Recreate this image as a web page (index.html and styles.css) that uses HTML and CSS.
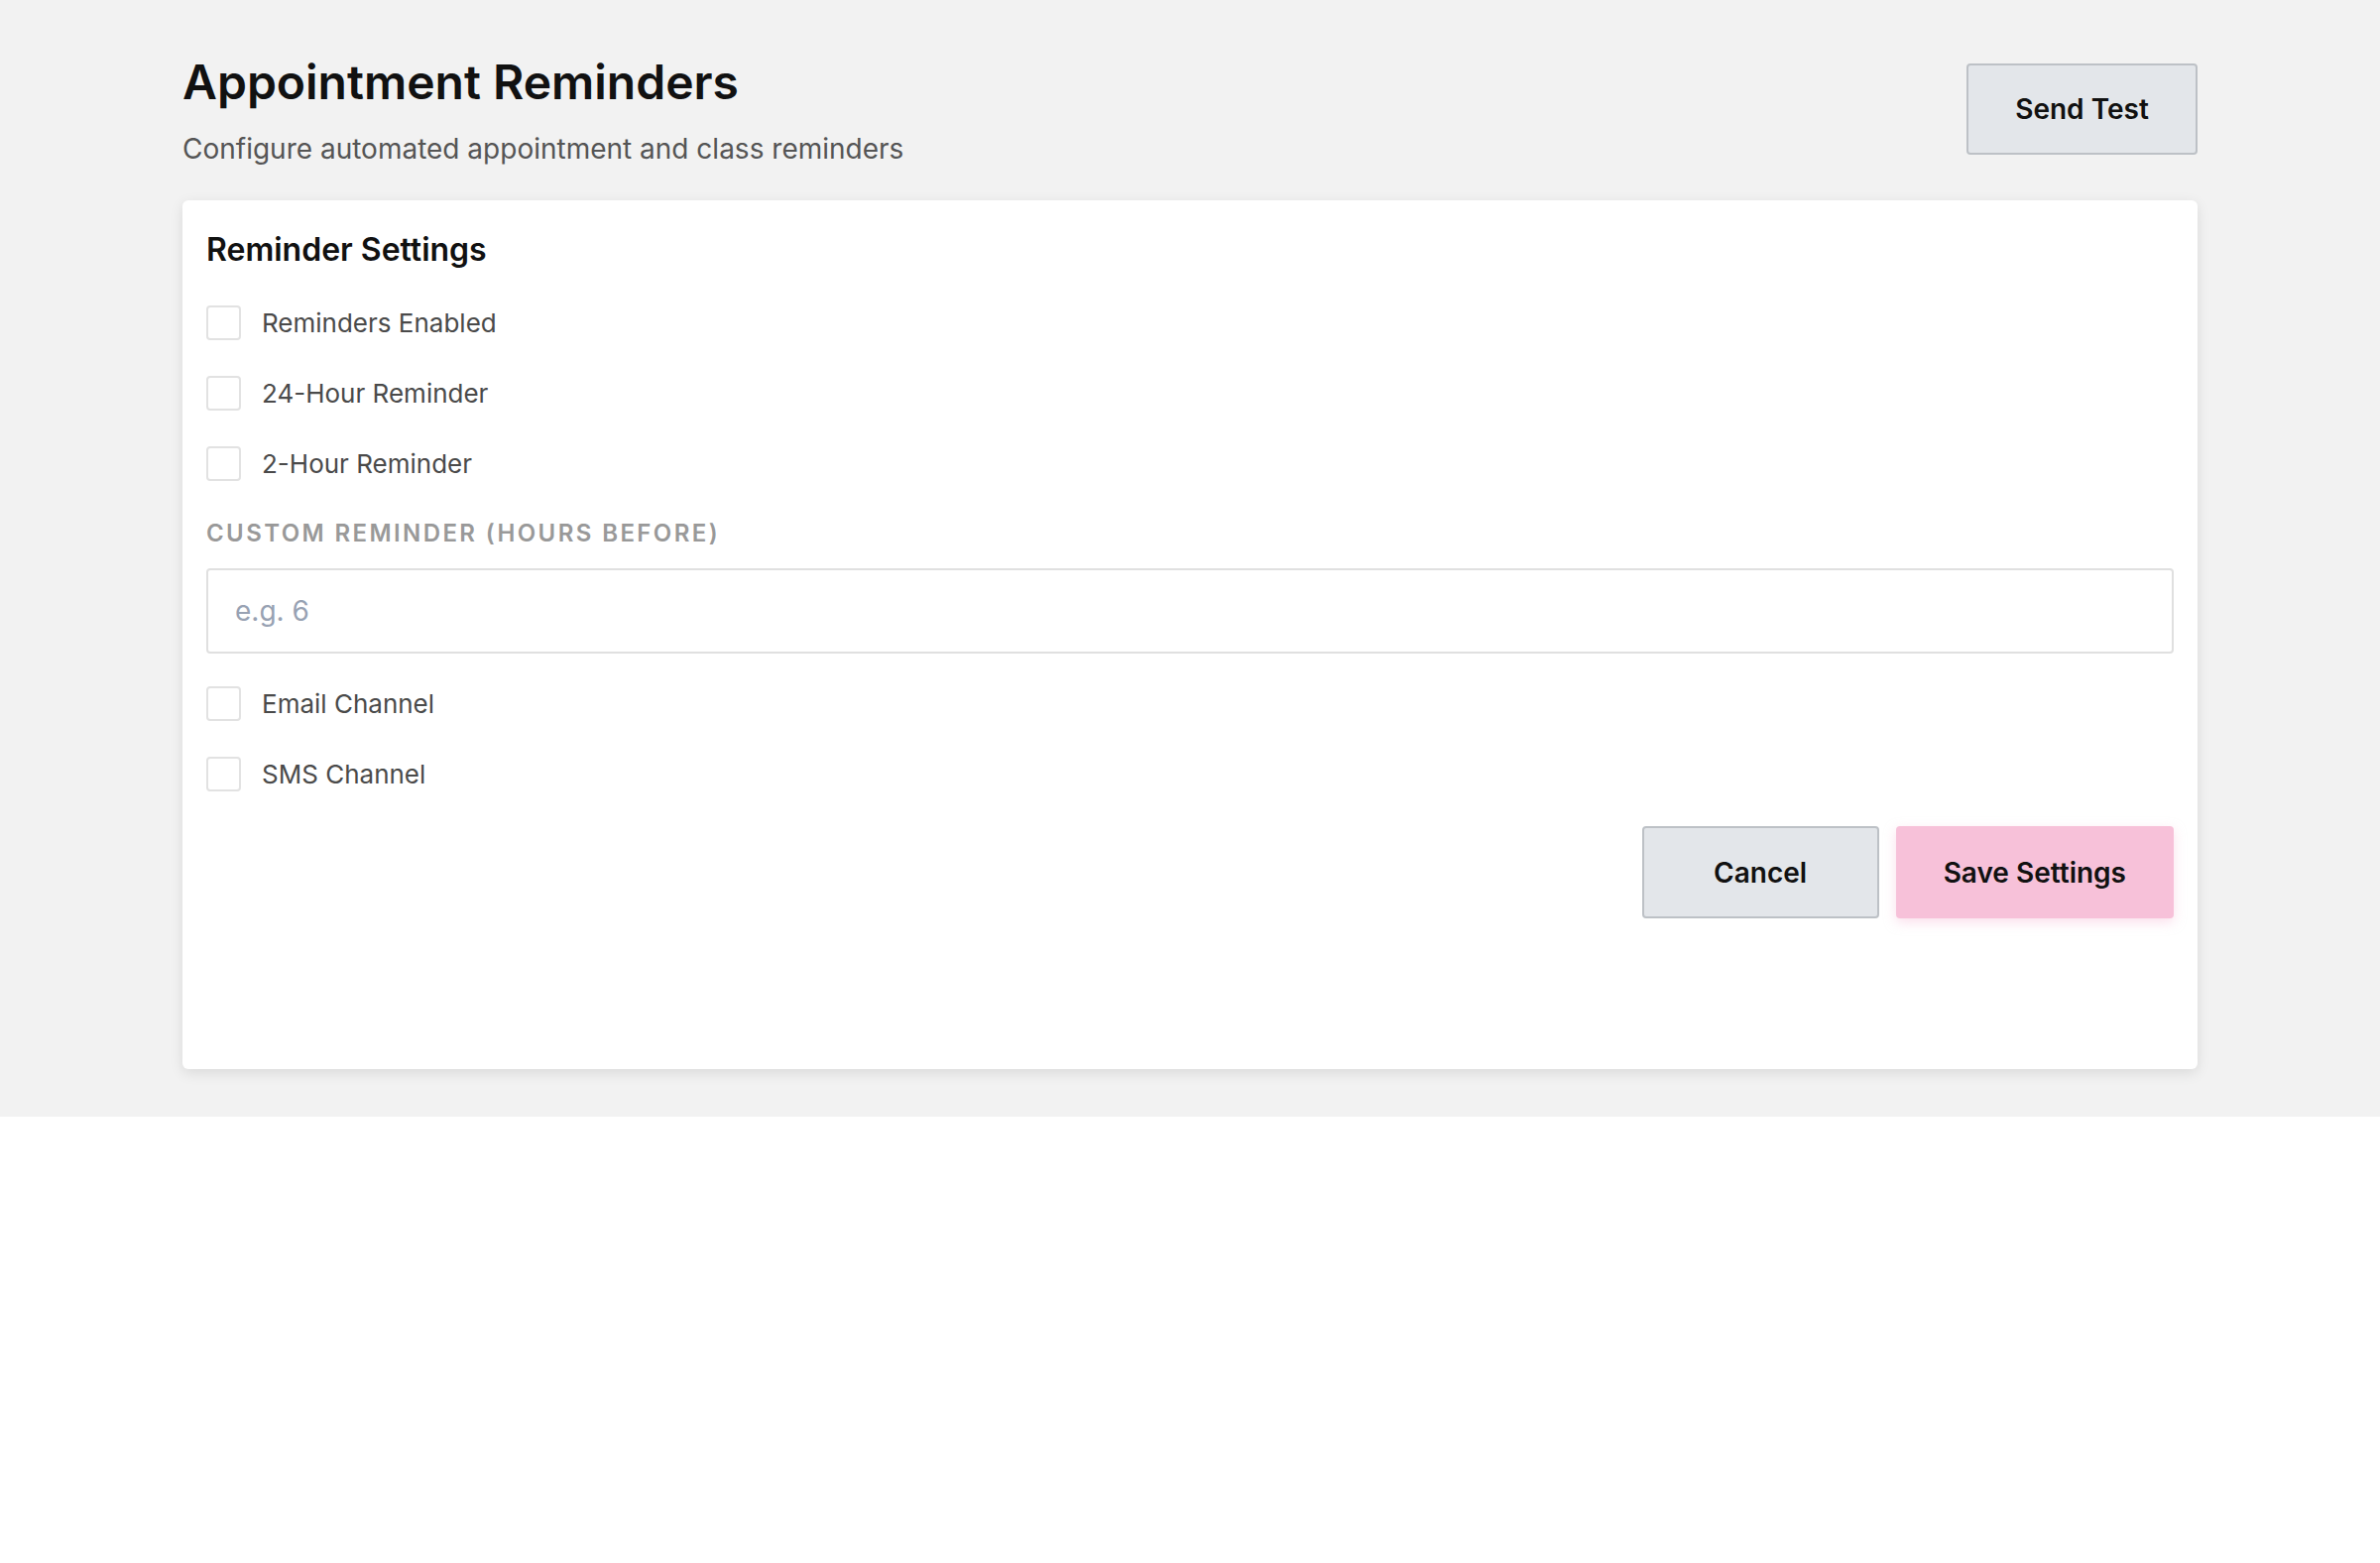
FILE: index.html
```html
<!DOCTYPE html>
<html>
<head>
    <title>Appointment Reminders</title>
    <link rel="stylesheet" href="styles.css">
</head>
<body>
    <div class="page">
        <div class="container">
            <div class="header">
                <div>
                    <h1>Appointment Reminders</h1>
                    <p class="subtitle">Configure automated appointment and class reminders</p>
                </div>
                <button class="btn btn-secondary" onclick="sendTest()">Send Test</button>
            </div>

            <div class="card">
                <h2>Reminder Settings</h2>

                <form class="settings" onsubmit="saveSettings(event)">
                    <label class="check-row">
                        <input type="checkbox" id="enabled">
                        <span>Reminders Enabled</span>
                    </label>
                    <label class="check-row">
                        <input type="checkbox" id="remind24">
                        <span>24-Hour Reminder</span>
                    </label>
                    <label class="check-row">
                        <input type="checkbox" id="remind2">
                        <span>2-Hour Reminder</span>
                    </label>

                    <div class="field">
                        <label class="field-label" for="customHours">Custom Reminder (hours before)</label>
                        <input type="number" id="customHours" class="text-input" placeholder="e.g. 6">
                    </div>

                    <label class="check-row">
                        <input type="checkbox" id="email">
                        <span>Email Channel</span>
                    </label>
                    <label class="check-row">
                        <input type="checkbox" id="sms">
                        <span>SMS Channel</span>
                    </label>

                    <div class="actions">
                        <button type="button" class="btn btn-secondary" onclick="resetForm()">Cancel</button>
                        <button type="submit" class="btn btn-primary">Save Settings</button>
                    </div>
                </form>
            </div>
        </div>
    </div>

    <script>
        function sendTest() {
            console.log('Sending test reminder');
        }

        function resetForm() {
            document.querySelector('.settings').reset();
        }

        function saveSettings(e) {
            e.preventDefault();
            const settings = {
                enabled: document.getElementById('enabled').checked,
                remind24: document.getElementById('remind24').checked,
                remind2: document.getElementById('remind2').checked,
                customHours: document.getElementById('customHours').value,
                email: document.getElementById('email').checked,
                sms: document.getElementById('sms').checked
            };
            console.log('Saved', settings);
        }
    </script>
</body>
</html>
```

FILE: styles.css
```css
body { margin: 0; font-family: Inter, "Noto Sans", sans-serif; color: #111; background: #fff; }
.page { background: #f2f2f2; padding: 48px 0; }
.container { max-width: 2032px; margin: 0 auto; }

.header { display: flex; justify-content: space-between; align-items: center; margin-bottom: 31px; }
h1 { font-size: 48px; font-weight: 600; line-height: 58px; margin: 6px 0 0; color: #111; }
.subtitle { font-size: 28px; line-height: 42px; margin: 17px 0 0; color: #555; }

.card { background: #fff; border-radius: 6px; box-shadow: 0 4px 14px rgba(0,0,0,0.1); padding: 30px 24px 24px; min-height: 876px; box-sizing: border-box; }
h2 { font-size: 32px; font-weight: 600; line-height: 40px; margin: 0 0 32px; color: #111; }

.settings { display: flex; flex-direction: column; gap: 29px; }
.check-row { display: flex; align-items: center; gap: 21px; height: 42px; font-size: 26px; color: #4a4a4a; cursor: pointer; }
.check-row input { appearance: none; width: 35px; height: 35px; margin: 0; border: 2px solid #e2e2e2; border-radius: 4px; background: #fff; box-sizing: border-box; }
.check-row input:checked { background: #f7c1d9; border-color: #e9a3c3; }

.field { display: flex; flex-direction: column; gap: 17px; margin-top: 3px; }
.field-label { font-size: 24px; line-height: 36px; font-weight: 600; letter-spacing: 2.4px; text-transform: uppercase; color: #999; }
.text-input { height: 86px; padding: 0 27px; border: 2px solid #e0e0e0; border-radius: 4px; font-family: inherit; font-size: 28px; color: #333; box-sizing: border-box; outline: none; }
.text-input::placeholder { color: #98a2b3; }

.actions { display: flex; justify-content: flex-end; gap: 17px; margin-top: 3px; }
.btn { min-width: 239px; height: 93px; padding: 0 48px; border-radius: 4px; font-family: inherit; font-size: 28px; font-weight: 600; color: #111; cursor: pointer; box-sizing: border-box; }
.btn-secondary { background: #e3e6ea; border: 2px solid #bdc1c6; }
.btn-primary { background: #f7c1d9; border: none; box-shadow: 0 4px 12px rgba(247,193,217,0.5); }
.header .btn { min-width: 0; width: 233px; height: 92px; padding: 0; }
```
